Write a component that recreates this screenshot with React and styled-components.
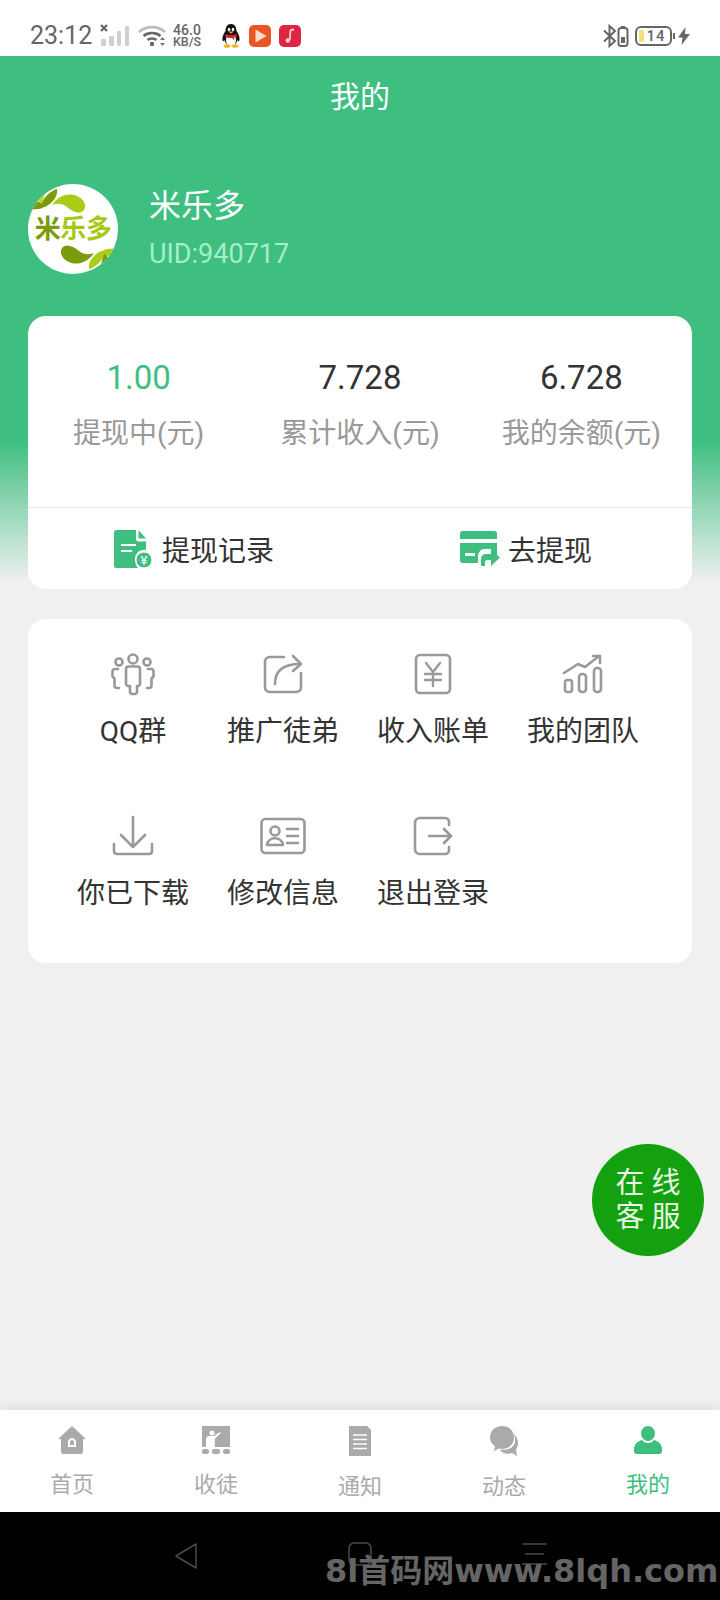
import React from "react";
import styled, { createGlobalStyle } from "styled-components";

const GREEN = "#3ebf80";
const FONT = `Roboto, "Noto Sans CJK SC", sans-serif`;

const GlobalStyle = createGlobalStyle`
  html, body {
    margin: 0;
    padding: 0;
    background: #f0f0f0;
  }
  body {
    font-family: ${FONT};
  }
`;

const Screen = styled.div`
  position: relative;
  width: 720px;
  height: 1600px;
  display: flex;
  flex-direction: column;
  overflow: hidden;
  background: #f0f0f0;
`;

const StatusBar = styled.div`
  height: 56px;
  flex: none;
  background: #fff;
  display: flex;
  align-items: center;
  padding: 0 30px;
  box-sizing: border-box;
  color: #666;
`;

const Time = styled.span`
  font-size: 25px;
  line-height: 30px;
  margin-top: 16px;
  margin-bottom: 0;
  width: 70px;
  align-self: flex-start;
  margin-top: 21px;
`;

const StatusIcons = styled.div`
  display: flex;
  align-items: center;
  gap: ${(p) => p.$gap || 8}px;
  margin-left: ${(p) => p.$left || 0}px;
  margin-top: 15px;
`;

const Speed = styled.div`
  display: flex;
  flex-direction: column;
  align-items: center;
  font-size: 12.5px;
  line-height: 11px;
  font-weight: 500;
  width: 28px;
  margin-left: -1px;
  margin-right: 12px;
  span:first-child {
    font-size: 14px;
    line-height: 12px;
  }
`;

const Spacer = styled.div`
  flex: 1;
`;

const Battery = styled.div`
  position: relative;
  width: 37px;
  height: 20px;
  border: 2px solid #666;
  border-radius: 6px;
  box-sizing: border-box;
  display: flex;
  align-items: center;
  justify-content: center;
  padding-left: 5px;
  font-size: 15px;
  font-weight: 500;
  letter-spacing: 1px;
  &::before {
    content: "";
    position: absolute;
    left: 2px;
    top: 2px;
    bottom: 2px;
    width: 5px;
    border-radius: 2px;
    background: #f7de78;
  }
  &::after {
    content: "";
    position: absolute;
    right: -5px;
    top: 5px;
    width: 2px;
    height: 6px;
    background: #666;
  }
`;

const Main = styled.main`
  flex: 1;
  min-height: 0;
  box-sizing: border-box;
  padding: 0 28px;
  background: linear-gradient(#3ebf80 0, #3ebf80 384px, #f0f0f0 526px);
`;

const Title = styled.h1`
  margin: 0;
  height: 82px;
  line-height: 82px;
  text-align: center;
  font-size: 30px;
  font-weight: 400;
  color: #fff;
`;

const Profile = styled.section`
  display: flex;
  align-items: center;
  gap: 31px;
  margin-top: 46px;
  height: 90px;
`;

const Avatar = styled.div`
  position: relative;
  width: 90px;
  height: 90px;
  border-radius: 50%;
  background: #fff;
  overflow: hidden;
  flex: none;
  svg {
    display: block;
  }
`;

const AvatarName = styled.div`
  position: absolute;
  left: 0;
  right: 0;
  top: 28px;
  text-align: center;
  font-size: 26px;
  line-height: 34px;
  font-weight: 700;
  white-space: nowrap;
  color: #a5c814;
  letter-spacing: -0.5px;
  span {
    color: #7a9b0a;
  }
`;

const ProfileText = styled.div`
  display: flex;
  flex-direction: column;
`;

const UserName = styled.div`
  font-size: 32px;
  line-height: 40px;
  color: #fff;
  margin-top: -2px;
`;

const Uid = styled.div`
  font-size: 27px;
  line-height: 34px;
  margin-top: 11px;
  color: #a5eecb;
`;

const Card = styled.section`
  background: #fff;
  border-radius: 18px;
  overflow: hidden;
`;

const EarningsCard = styled(Card)`
  margin-top: 42px;
`;

const Stats = styled.div`
  display: grid;
  grid-template-columns: repeat(3, 1fr);
  height: 192px;
  box-sizing: border-box;
  padding-top: 40px;
  border-bottom: 1px solid #e6e6e6;
`;

const Stat = styled.div`
  text-align: center;
`;

const StatValue = styled.div`
  font-size: 33px;
  line-height: 44px;
  color: ${(p) => (p.$accent ? GREEN : "#333")};
`;

const StatLabel = styled.div`
  font-size: 28px;
  line-height: 44px;
  margin-top: 12px;
  color: #999;
`;

const Actions = styled.div`
  display: grid;
  grid-template-columns: 1fr 1fr;
  height: 81px;
`;

const Action = styled.div`
  display: flex;
  align-items: center;
  justify-content: center;
  gap: ${(p) => p.$gap}px;
  font-size: 28px;
  color: #333;
  svg {
    flex: none;
  }
`;

const MenuCard = styled(Card)`
  margin-top: 30px;
  display: grid;
  grid-template-columns: repeat(4, 150px);
  row-gap: 58px;
  padding: 30px 34px 48px 30px;
`;

const MenuItem = styled.div`
  display: flex;
  flex-direction: column;
  align-items: center;
  svg {
    display: block;
  }
`;

const MenuLabel = styled.div`
  margin-top: 12px;
  font-size: 28px;
  line-height: 42px;
  color: #333;
  white-space: nowrap;
`;

const TabBar = styled.nav`
  position: relative;
  height: 102px;
  flex: none;
  display: grid;
  grid-template-columns: repeat(5, 144px);
  background: #fff;
  box-shadow: 0 -3px 10px rgba(0, 0, 0, 0.07);
`;

const Tab = styled.div`
  display: flex;
  flex-direction: column;
  align-items: center;
  padding-top: 16px;
  color: ${(p) => (p.$active ? GREEN : "#aaa")};
  svg {
    display: block;
  }
`;

const TabLabel = styled.div`
  margin-top: 15px;
  font-size: 22px;
  line-height: 32px;
`;

const NavBar = styled.div`
  position: relative;
  height: 88px;
  flex: none;
  background: #000;
  display: flex;
  align-items: flex-start;
  gap: 150px;
  padding: 30px 0 0 174px;
  box-sizing: border-box;
`;

const Watermark = styled.div`
  position: absolute;
  left: 325px;
  top: 37px;
  font-family: "DejaVu Sans", "Noto Sans CJK SC", sans-serif;
  font-size: 32px;
  line-height: 44px;
  font-weight: 700;
  white-space: nowrap;
  color: #656565;
`;

const ChatBubble = styled.div`
  position: absolute;
  left: 592px;
  top: 1144px;
  width: 112px;
  height: 112px;
  border-radius: 50%;
  background: #14a10f;
  color: #e6f6e2;
  display: flex;
  flex-direction: column;
  align-items: center;
  justify-content: center;
  font-size: 29px;
  line-height: 34px;
  letter-spacing: 7px;
  text-indent: 7px;
`;

const Signal = () => (
  <svg width="30" height="24" viewBox="0 0 30 24" fill="#d0d0d0">
    <path d="M1 1l6 6M7 1L1 7" stroke="#666" strokeWidth="2.2" fill="none" />
    <rect x="1" y="15" width="5" height="7" rx="1" />
    <rect x="9" y="12" width="5" height="10" rx="1" />
    <rect x="17" y="7" width="4" height="15" rx="1" />
    <rect x="25" y="2" width="4" height="20" rx="1" />
  </svg>
);

const Wifi = () => (
  <svg width="28" height="22" viewBox="0 0 28 22" fill="none">
    <path d="M1 7c7-6.5 19-6.5 26 0" stroke="#bbb" strokeWidth="2.6" />
    <path d="M5.500 11c4.500-4 12.500-4 17 0" stroke="#666" strokeWidth="2.6" />
    <path d="M9.500 15c2.500-2 6.500-2 9 0" stroke="#666" strokeWidth="2.6" />
    <circle cx="14" cy="19" r="2.200" fill="#666" />
    <path d="M22 15l2.500-3 2.500 3zM22 18h5l-2.500 3z" fill="#777" />
  </svg>
);

const QQ = () => (
  <svg width="20" height="24" viewBox="0 0 20 24">
    <path d="M10 0c4 0 5.500 3.500 5.500 7 2 3 3.500 6 3 9-.5 2-1.500 1-2 0-.5 2-1.500 3.500-2.500 4.500H6C5 19.500 4 18 3.500 16c-.5 1-1.500 2-2 0-.5-3 1-6 3-9C4.500 3.500 6 0 10 0z" fill="#111" />
    <path d="M5.500 13c1-1.500 8-1.500 9 0 1 3 .5 6-1 8H6.500c-1.500-2-2-5-1-8z" fill="#fff" />
    <ellipse cx="8" cy="5.500" rx="1.300" ry="1.800" fill="#fff" />
    <ellipse cx="12" cy="5.500" rx="1.300" ry="1.800" fill="#fff" />
    <path d="M7 7.500h6l-3 2z" fill="#f3b51b" />
    <path d="M4.500 10c3 1.500 8 1.500 11 0l.5 2c-1 1-2 1.500-3 1.500l.5 3-2.500-2.500c-2 .3-5 0-7-2z" fill="#d8232a" />
    <ellipse cx="6" cy="22" rx="3.500" ry="1.800" fill="#f3b51b" />
    <ellipse cx="14" cy="22" rx="3.500" ry="1.800" fill="#f3b51b" />
  </svg>
);

const VideoApp = () => (
  <svg width="22" height="22" viewBox="0 0 22 22">
    <rect width="22" height="22" rx="5" fill="#ea5426" />
    <path d="M6.500 4.500L17.500 11 6.500 17.500z" fill="#fbdcc9" />
  </svg>
);

const MusicApp = () => (
  <svg width="22" height="22" viewBox="0 0 22 22">
    <rect width="22" height="22" rx="5" fill="#df2540" />
    <path d="M11.500 5l3.500-.5M11.500 5l-.8 10" stroke="#fbd0d0" strokeWidth="1.800" fill="none" />
    <circle cx="8.800" cy="15.500" r="2.200" fill="#fbd0d0" />
  </svg>
);

const BluetoothBattery = () => (
  <svg width="26" height="24" viewBox="0 0 26 24" fill="none" stroke="#666" strokeWidth="2">
    <path d="M1 6.500l11 10.500-5.500 5V2l5.500 5L1 17.500" />
    <rect x="15.500" y="4" width="9" height="18" rx="2.500" />
    <path d="M18 3h4" />
    <rect x="18" y="13" width="4" height="6" fill="#666" stroke="none" />
  </svg>
);

const Bolt = () => (
  <svg width="12" height="18" viewBox="0 0 12 18">
    <path d="M7.500 0L0 10.500h4.500L3.500 18 12 7H7z" fill="#666" />
  </svg>
);

const AvatarLeaves = () => {
  const leaves = (blob, petalA, petalB, petalC) => (
    <>
      <path d="M24 21C30 12 40 8 49 12C56 15 59 21 56 26C52 31 45 28 39 23C34 19 29 19 24 21Z" fill={blob} />
      <path d="M13 21C16 12 24 6 29 5C30 12 25 19 17 23Z" fill={petalA} />
      <path d="M4 21C8 17 14 17 20 20C15 25 9 26 3 25Z" fill={petalB} />
      <path d="M9 16L17 10L14 20Z" fill={petalC} />
    </>
  );
  return (
    <svg width="90" height="90" viewBox="0 0 90 90">
      {leaves("#a9cc16", "#7a9b0a", "#7a9b0a", "#bcd92a")}
      <g transform="rotate(180 45 45)">{leaves("#7a9b0a", "#a9cc16", "#a9cc16", "#7a9b0a")}</g>
    </svg>
  );
};

const RecordIcon = () => (
  <svg width="38" height="38" viewBox="0 0 38 38">
    <path d="M2 0h20v9c0 1.500 1 2.500 2.500 2.500H32V20c-6-1-11 3.500-11 9.500 0 3 1 6 3 8.500H2c-1 0-2-1-2-2V2C0 1 1 0 2 0z" fill={GREEN} />
    <path d="M24.500 0L32 8.500h-7.500z" fill={GREEN} />
    <path d="M7 15h15M7 21h11" stroke="#fff" strokeWidth="2" />
    <circle cx="30" cy="30" r="8" fill={GREEN} stroke="#fff" strokeWidth="1" />
    <text x="30" y="35" textAnchor="middle" fontSize="13" fontFamily="Roboto, sans-serif" fill="#fff">¥</text>
  </svg>
);

const WithdrawIcon = () => (
  <svg width="40" height="36" viewBox="0 0 40 36">
    <path d="M0 3c0-2 1-3 3-3h31c2 0 3 1 3 3v5H0z" fill={GREEN} />
    <path d="M0 12h37v12h-6v-6l-7 0c-3 0-6 3-6 8v6H3c-2 0-3-1-3-3z" fill={GREEN} />
    <rect x="5" y="22" width="10" height="3" fill="#fff" />
    <path d="M21 35v-7c0-3 2-5 5-5h5v-5l9 8.500-9 8.500v-6h-4c-1 0-2 1-2 2v4z" fill={GREEN} />
  </svg>
);

const icon = {
  width: 50,
  height: 50,
  viewBox: "0 0 50 50",
  fill: "none",
  stroke: "#999",
  strokeWidth: 2.6,
  strokeLinecap: "round",
  strokeLinejoin: "round",
};

const menuIcons = {
  group: (
    <svg {...icon}>
      <circle cx="25" cy="10" r="4.500" />
      <circle cx="11" cy="13" r="3.500" />
      <circle cx="39" cy="13" r="3.500" />
      <path d="M10 20H7c-1.500 0-2.500 1-2.500 2.500v5l2 2v7c0 1.500 1 2.500 2.500 2.500h2" />
      <path d="M40 20h3c1.500 0 2.500 1 2.500 2.500v5l-2 2v7c0 1.500-1 2.500-2.500 2.500h-2" />
      <path d="M18 20c0-1.500 1-2.500 2.500-2.500h9c1.500 0 2.500 1 2.500 2.500v15c0 1-1 2-2 2h-1v6c0 1-1 2-2 2h-3c-1 0-2-1-2-2v-6h-1.500c-1 0-2.500-1-2.500-2z" />
    </svg>
  ),
  share: (
    <svg {...icon}>
      <path d="M26 8H12c-3 0-5 2-5 5v25c0 3 2 5 5 5h26c3 0 5-2 5-5V24" />
      <path d="M17 35c0-13 8-20 25-20" />
      <path d="M35 7l8 8-8 7" />
    </svg>
  ),
  yen: (
    <svg {...icon}>
      <rect x="8" y="6" width="34" height="38" rx="4" />
      <path d="M18 14l7 9 7-9M17 25h16M17 31h16M25 23v14" strokeWidth="2.400" />
    </svg>
  ),
  chart: (
    <svg {...icon}>
      <rect x="7" y="31" width="7" height="12" rx="2.500" />
      <rect x="21" y="25" width="7" height="18" rx="3" />
      <rect x="36" y="19" width="7" height="24" rx="3" />
      <path d="M6 24l14-9 7 3 14-11" />
      <path d="M35 7h7v7" />
    </svg>
  ),
  download: (
    <svg {...icon}>
      <path d="M25 6v29M13 24l12 12 12-12" />
      <path d="M6 33v7c0 2 1 3 3 3h32c2 0 3-1 3-3v-7" />
    </svg>
  ),
  card: (
    <svg {...icon}>
      <rect x="3.500" y="8" width="43" height="34" rx="4" />
      <circle cx="17" cy="20" r="4.500" />
      <path d="M9 34c1-9 15-9 16 0z" />
      <path d="M29 18h11M29 25h11M29 32h11" />
    </svg>
  ),
  exit: (
    <svg {...icon}>
      <path d="M41 14v-3c0-2-1.500-4-4-4H12c-3 0-5 2-5 5v26c0 3 2 5 5 5h25c2.500 0 4-2 4-4v-3" />
      <path d="M21 25h22M36 18l7 7-7 7" />
    </svg>
  ),
};

const tabIcons = {
  home: (
    <svg width="30" height="28" viewBox="0 0 30 28">
      <path d="M15 0L29 13h-3v13c0 1-1 2-2 2H6c-1 0-2-1-2-2V13H1z" fill="#aaa" />
      <path d="M11 21v-5c0-2 2-4 4-4s4 2 4 4v5z" fill="#fff" />
      <path d="M13 19v-3c0-1 1-2 2-2s2 1 2 2v3z" fill="#aaa" />
    </svg>
  ),
  teach: (
    <svg width="28" height="28" viewBox="0 0 28 28">
      <path d="M0 0h28v21H0z" fill="#aaa" />
      <circle cx="10" cy="7" r="2.500" fill="#fff" />
      <path d="M4 21v-8c0-2 2-3 3-3h5l6-4 .8 1-6 6v8z" fill="#fff" />
      <rect x="0" y="23" width="7" height="5" rx="2" fill="#aaa" />
      <rect x="10" y="23" width="8" height="5" rx="2" fill="#aaa" />
      <rect x="21" y="23" width="7" height="5" rx="2" fill="#aaa" />
    </svg>
  ),
  doc: (
    <svg width="22" height="30" viewBox="0 0 22 30">
      <path d="M0 0h18l4 4v26H0z" fill="#aaa" />
      <path d="M4 9h14M4 13.500h14M4 18h14M4 22.500h14" stroke="#fff" strokeWidth="1.300" />
    </svg>
  ),
  chat: (
    <svg width="30" height="30" viewBox="0 0 30 30">
      <path d="M13 0c7 0 12 5 12 11.500S20 23 13 23c-1 0-2 0-3-.4L5 25l1-4.500C3 18 1 15 1 11.500 1 5 6 0 13 0z" fill="#aaa" />
      <path d="M25 8c3 3 4 6 4 9 0 3-1 5-2 6.500l1 6.500-5-3c-3 1-7 1-10-1-1-.5-2-1.500-2-2.500 5 1 11 0 14-5 2-3 1-7 0-10.500z" fill="#aaa" />
    </svg>
  ),
  user: (
    <svg width="28" height="28" viewBox="0 0 28 28">
      <ellipse cx="14" cy="7.500" rx="7" ry="7.500" fill={GREEN} />
      <path d="M8 14c3 4 9 4 12 0 4 1 8 4 8 9v2c0 2-1 3-3 3H3c-2 0-3-1-3-3v-2c0-5 4-8 8-9z" fill={GREEN} />
    </svg>
  ),
};

const menu = [
  ["group", "QQ群"],
  ["share", "推广徒弟"],
  ["yen", "收入账单"],
  ["chart", "我的团队"],
  ["download", "你已下载"],
  ["card", "修改信息"],
  ["exit", "退出登录"],
];

const tabs = [
  ["home", "首页"],
  ["teach", "收徒"],
  ["doc", "通知"],
  ["chat", "动态"],
  ["user", "我的"],
];

const App = () => {
  return (
    <Screen>
      <GlobalStyle />
      <StatusBar>
        <Time>23:12</Time>
        <StatusIcons>
          <Signal />
          <Wifi />
          <Speed>
            <span>46.0</span>
            <span>KB/S</span>
          </Speed>
          <QQ />
          <VideoApp />
          <MusicApp />
        </StatusIcons>
        <Spacer />
        <StatusIcons $gap={6}>
          <BluetoothBattery />
          <Battery>14</Battery>
          <Bolt />
        </StatusIcons>
      </StatusBar>

      <Main>
        <Title>我的</Title>
        <Profile>
          <Avatar>
            <AvatarLeaves />
            <AvatarName>
              <span>米</span>乐多
            </AvatarName>
          </Avatar>
          <ProfileText>
            <UserName>米乐多</UserName>
            <Uid>UID:940717</Uid>
          </ProfileText>
        </Profile>

        <EarningsCard>
          <Stats>
            <Stat>
              <StatValue $accent>1.00</StatValue>
              <StatLabel>提现中(元)</StatLabel>
            </Stat>
            <Stat>
              <StatValue>7.728</StatValue>
              <StatLabel>累计收入(元)</StatLabel>
            </Stat>
            <Stat>
              <StatValue>6.728</StatValue>
              <StatLabel>我的余额(元)</StatLabel>
            </Stat>
          </Stats>
          <Actions>
            <Action $gap={10}>
              <RecordIcon />
              提现记录
            </Action>
            <Action $gap={8}>
              <WithdrawIcon />
              去提现
            </Action>
          </Actions>
        </EarningsCard>

        <MenuCard>
          {menu.map(([key, label]) => (
            <MenuItem key={key}>
              {menuIcons[key]}
              <MenuLabel>{label}</MenuLabel>
            </MenuItem>
          ))}
        </MenuCard>
      </Main>

      <TabBar>
        {tabs.map(([key, label]) => (
          <Tab key={key} $active={key === "user"}>
            {tabIcons[key]}
            <TabLabel>{label}</TabLabel>
          </Tab>
        ))}
      </TabBar>

      <NavBar>
        <svg width="24" height="28" viewBox="0 0 24 28" fill="none" stroke="#4a4a4a" strokeWidth="1.500">
          <path d="M22 2L2 14l20 12z" strokeLinejoin="round" />
        </svg>
        <svg width="24" height="24" viewBox="0 0 24 24" fill="none" stroke="#4a4a4a" strokeWidth="1.500">
          <rect x="1" y="1" width="22" height="22" rx="5" />
        </svg>
        <svg width="25" height="24" viewBox="0 0 25 24" fill="none" stroke="#4a4a4a" strokeWidth="1.500">
          <path d="M0 2h25M3 12h19M0 22h25" />
        </svg>
        <Watermark>8l首码网www.8lqh.com</Watermark>
      </NavBar>

      <ChatBubble>
        <span>在线</span>
        <span>客服</span>
      </ChatBubble>
    </Screen>
  );
};

export default App;
